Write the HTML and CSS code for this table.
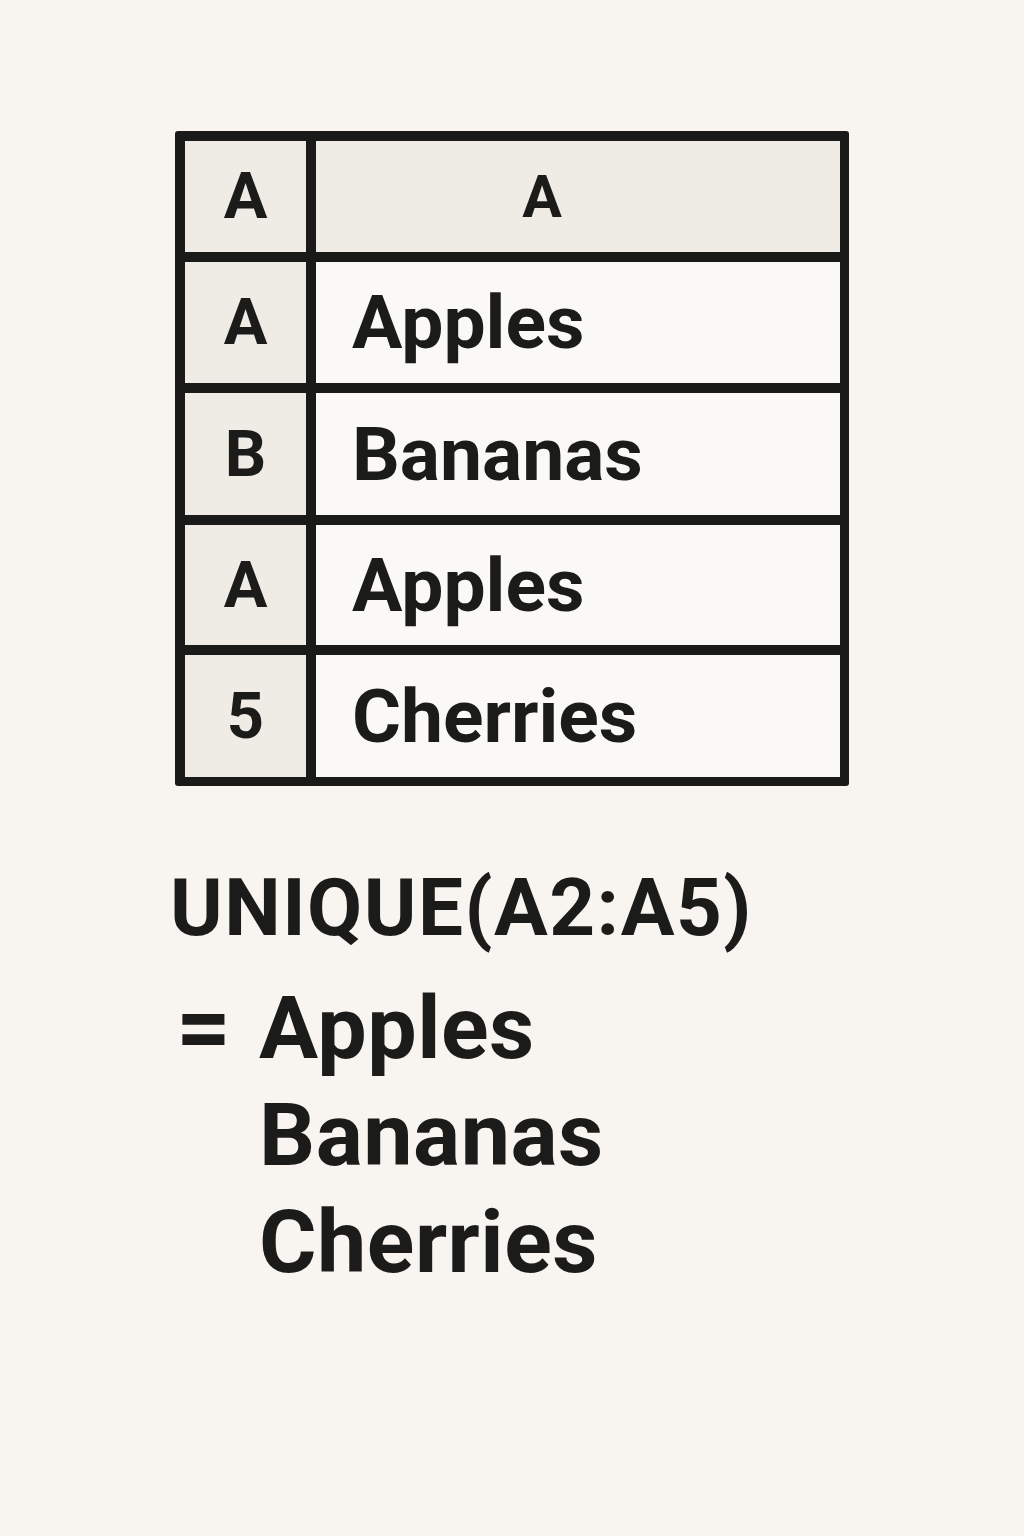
FILE: index.html
```html
<!DOCTYPE html>
<html lang="en">
<head>
<meta charset="utf-8">
<title>UNIQUE</title>
<link rel="stylesheet" href="styles.css">
</head>
<body>
<main class="page">
  <div class="sheet">
    <div class="cell head idx">A</div>
    <div class="cell head col">A</div>
    <div class="cell idx">A</div>
    <div class="cell data">Apples</div>
    <div class="cell idx">B</div>
    <div class="cell data">Bananas</div>
    <div class="cell idx">A</div>
    <div class="cell data">Apples</div>
    <div class="cell idx">5</div>
    <div class="cell data">Cherries</div>
  </div>
  <div class="formula">UNIQUE(A2:A5)</div>
  <div class="result">
    <div class="eq">=</div>
    <div class="values">
      <div>Apples</div>
      <div>Bananas</div>
      <div>Cherries</div>
    </div>
  </div>
</main>
</body>
</html>
```
FILE: styles.css
```css
html, body {
  margin: 0;
  padding: 0;
  background: #f8f5f0;
}
body {
  font-family: Roboto, "Liberation Sans", Arial, sans-serif;
  color: #1b1c1a;
  font-weight: 700;
}
.page {
  padding: 131px 0 0 175px;
}
.sheet {
  display: grid;
  width: max-content;
  grid-template-columns: 121px 524px;
  grid-template-rows: 111px 121px 122px 120px 122px;
  gap: 10px;
  padding: 10px 9px 9px 10px;
  background: #1a1b19;
  border-radius: 3px;
}
.cell {
  display: flex;
  align-items: center;
  line-height: 1;
  background: #fbf9f5;
}
.idx {
  justify-content: center;
  background: #efece5;
  font-size: 65px;
}
.head {
  background: #efece5;
}
.col {
  justify-content: center;
  padding-right: 72px;
  font-size: 59px;
}
.data {
  padding-left: 36px;
  font-size: 75px;
}
.formula {
  margin-top: 82px;
  margin-left: -5px;
  font-size: 80px;
  line-height: 1;
  letter-spacing: 1.5px;
}
.result {
  display: grid;
  grid-template-columns: 85px auto;
  margin-top: 26px;
  font-size: 88px;
  line-height: 107px;
}
.eq {
  padding-left: 1px;
  font-size: 96px;
}
.values {
  margin-left: -1px;
  letter-spacing: 0.5px;
}
```
